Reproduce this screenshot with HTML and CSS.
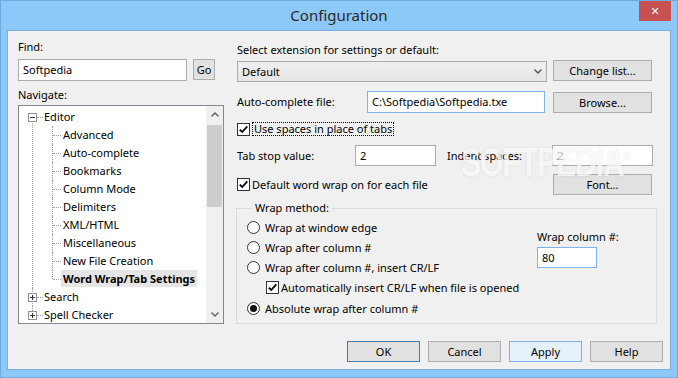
FILE: index.html
```html
<!DOCTYPE html>
<html lang="en">
<head>
  <meta charset="UTF-8"/>
  <title>Configuration</title>
  <link rel="stylesheet" href="styles.css">
</head>
<body>

  <div class="window">
    <div class="titlebar">
      <span class="title">Configuration</span>
      <button class="close-btn">&#x2715;</button>
    </div>

    <div class="panel">
      <div class="main">

        <!-- left: find + navigation tree -->
        <div class="left">
          <div class="lbl">Find:</div>
          <div class="find-row">
            <div class="field find">Softpedia</div>
            <button class="btn go">Go</button>
          </div>
          <div class="lbl nav-lbl">Navigate:</div>
          <div class="tree-box">
            <ul class="tree">
              <li>
                <svg class="exp" width="9" height="9" viewBox="0 0 9 9"><rect x="0.5" y="0.5" width="8" height="8" fill="#fff" stroke="#919191"/><path d="M2 4.5h5" stroke="#333"/></svg>
                <div class="row">Editor</div>
                <ul class="kids">
                  <li><div class="row">Advanced</div></li>
                  <li><div class="row">Auto-complete</div></li>
                  <li><div class="row">Bookmarks</div></li>
                  <li><div class="row">Column Mode</div></li>
                  <li><div class="row">Delimiters</div></li>
                  <li><div class="row">XML/HTML</div></li>
                  <li><div class="row">Miscellaneous</div></li>
                  <li><div class="row">New File Creation</div></li>
                  <li><div class="row sel"><span>Word Wrap/Tab Settings</span></div></li>
                </ul>
              </li>
              <li>
                <svg class="exp" width="9" height="9" viewBox="0 0 9 9"><rect x="0.5" y="0.5" width="8" height="8" fill="#fff" stroke="#919191"/><path d="M2 4.5h5M4.5 2v5" stroke="#333"/></svg>
                <div class="row">Search</div>
              </li>
              <li>
                <svg class="exp" width="9" height="9" viewBox="0 0 9 9"><rect x="0.5" y="0.5" width="8" height="8" fill="#fff" stroke="#919191"/><path d="M2 4.5h5M4.5 2v5" stroke="#333"/></svg>
                <div class="row">Spell Checker</div>
              </li>
            </ul>
            <div class="vscroll">
              <div class="arr"><svg width="8" height="5" viewBox="0 0 8 5"><path d="M0.5 4.5L4 1L7.5 4.5" fill="none" stroke="#606060" stroke-width="1.4"/></svg></div>
              <div class="thumb"></div>
              <div class="track"></div>
              <div class="arr"><svg width="8" height="5" viewBox="0 0 8 5"><path d="M0.5 0.5L4 4L7.5 0.5" fill="none" stroke="#606060" stroke-width="1.4"/></svg></div>
            </div>
          </div>
        </div>

        <!-- right: settings for the selected page -->
        <div class="right">
          <div class="lbl">Select extension for settings or default:</div>
          <div class="row-ext">
            <div class="select">
              <span>Default</span>
              <svg width="8" height="5" viewBox="0 0 8 5"><path d="M0.5 0.5L4 4L7.5 0.5" fill="none" stroke="#555" stroke-width="1.4"/></svg>
            </div>
            <button class="btn wide">Change list...</button>
          </div>

          <div class="row-file">
            <div class="lbl file-lbl">Auto-complete file:</div>
            <div class="field focus file">C:\Softpedia\Softpedia.txe</div>
            <button class="btn wide">Browse...</button>
          </div>

          <div class="check-row">
            <span class="chk"><svg width="11" height="11" viewBox="0 0 11 11"><path d="M1.8 5.6L4.2 8L9.3 2.3" fill="none" stroke="#000" stroke-width="1.8"/></svg></span>
            <span class="focus-text">Use spaces in place of tabs</span>
          </div>

          <div class="row-tabs">
            <div class="lbl tab-lbl">Tab stop value:</div>
            <div class="field small">2</div>
            <div class="lbl indent-lbl">Indent spaces:</div>
            <div class="field indent">2</div>
          </div>

          <div class="check-row wrap-row">
            <span class="chk"><svg width="11" height="11" viewBox="0 0 11 11"><path d="M1.8 5.6L4.2 8L9.3 2.3" fill="none" stroke="#000" stroke-width="1.8"/></svg></span>
            <span>Default word wrap on for each file</span>
            <button class="btn wide font-btn">Font...</button>
          </div>

          <fieldset class="group">
            <legend>Wrap method:</legend>
            <div class="group-body">
              <div class="options">
                <div class="opt"><span class="radio"></span>Wrap at window edge</div>
                <div class="opt"><span class="radio"></span>Wrap after column #</div>
                <div class="opt"><span class="radio"></span>Wrap after column #, insert CR/LF</div>
                <div class="opt sub">
                  <span class="chk"><svg width="11" height="11" viewBox="0 0 11 11"><path d="M1.8 5.6L4.2 8L9.3 2.3" fill="none" stroke="#000" stroke-width="1.8"/></svg></span>
                  Automatically insert CR/LF when file is opened
                </div>
                <div class="opt"><span class="radio on"></span>Absolute wrap after column #</div>
              </div>
              <div class="wrapcol">
                <div class="lbl">Wrap column #:</div>
                <div class="field focus col">80</div>
              </div>
            </div>
          </fieldset>
        </div>
      </div>

      <div class="footer">
        <button class="btn dlg default">OK</button>
        <button class="btn dlg">Cancel</button>
        <button class="btn dlg hot">Apply</button>
        <button class="btn dlg">Help</button>
      </div>

      <div class="watermark">SOFTPEDIA<sup>&reg;</sup></div>
    </div>
  </div>

</body>
</html>
```

FILE: styles.css
```css
* {
  margin: 0; padding: 0;
  box-sizing: border-box;
}

body {
  background: #8cc8f8;
  font-family: "Noto Sans", "Open Sans", sans-serif;
  font-size: 11px;
  color: #000;
}

.window {
  width: 678px;
  height: 378px;
  background: #8cc8f8;
  border: 1px solid #6fa9e0;
  display: flex;
  flex-direction: column;
  position: relative;
}

.titlebar {
  height: 29px;
  display: flex;
  justify-content: center;
  align-items: center;
  padding-bottom: 1px;
  font-size: 15px;
  color: #2b2b2b;
}

.close-btn {
  position: absolute;
  top: 0;
  right: 6px;
  width: 32px;
  height: 20px;
  border: none;
  background: #c75050;
  color: #fff;
  font-size: 11px;
  font-weight: bold;
  font-family: "DejaVu Sans", sans-serif;
}

.panel {
  margin: 0 6px;
  height: 340px;
  background: #f0f0f0;
  border: 1px solid #7aaee0;
  display: flex;
  flex-direction: column;
  position: relative;
}

.main {
  display: flex;
  gap: 13px;
  padding: 8px 13px 0 10px;
}

.lbl {
  height: 16px;
  line-height: 16px;
  white-space: nowrap;
}

/* generic controls */
.field {
  height: 22px;
  border: 1px solid #abadb3;
  background: #fff;
  padding: 0 4px;
  line-height: 20px;
  white-space: nowrap;
}

.field.focus {
  border-color: #7eb4ea;
}

.btn {
  height: 21px;
  border: 1px solid #adadad;
  background: #e1e1e1;
  font: inherit;
  color: #000;
  text-align: center;
  line-height: 19px;
}

.btn.wide {
  width: 99px;
  flex-shrink: 0;
}

.chk {
  width: 13px;
  height: 13px;
  border: 1px solid #333;
  background: #fff;
  display: inline-flex;
  flex-shrink: 0;
}

.radio {
  width: 13px;
  height: 13px;
  border: 1px solid #333;
  border-radius: 50%;
  background: #fff;
  display: inline-flex;
  align-items: center;
  justify-content: center;
  flex-shrink: 0;
}

.radio.on::after {
  content: "";
  width: 7px;
  height: 7px;
  border-radius: 50%;
  background: #111;
}

/* left column */
.left {
  width: 206px;
  flex-shrink: 0;
}

.find-row {
  display: flex;
  align-items: flex-start;
  gap: 6px;
  margin-top: 4px;
}

.find {
  width: 169px;
}

.go {
  width: 22px;
}

.nav-lbl {
  margin-top: 6px;
}

.tree-box {
  margin-top: 2px;
  height: 219px;
  border: 1px solid #828790;
  background: #fff;
  display: flex;
}

.tree {
  flex: 1;
  list-style: none;
  padding: 2px 0 0 13px;
  overflow: hidden;
}

.tree li {
  position: relative;
  list-style: none;
}

.row {
  height: 18px;
  line-height: 18px;
  white-space: nowrap;
}

.tree > li {
  padding-left: 12px;
}

.tree > li::before {
  content: "";
  position: absolute;
  left: 0; top: 0; bottom: 0;
  border-left: 1px dotted #a0a0a0;
}

.tree > li:first-child::before { top: 9px; }
.tree > li:last-child::before { bottom: auto; height: 9px; }

.tree > li::after {
  content: "";
  position: absolute;
  left: 5px; top: 9px;
  width: 6px;
  border-top: 1px dotted #a0a0a0;
}

.exp {
  position: absolute;
  left: -4px;
  top: 5px;
  z-index: 1;
}

.kids {
  margin-left: 8px;
}

.kids li {
  padding-left: 11px;
}

.kids li::before {
  content: "";
  position: absolute;
  left: 0; top: 0; bottom: 0;
  border-left: 1px dotted #a0a0a0;
}

.kids li:last-child::before { bottom: auto; height: 9px; }

.kids li::after {
  content: "";
  position: absolute;
  left: 1px; top: 9px;
  width: 8px;
  border-top: 1px dotted #a0a0a0;
}

.row.sel span {
  display: inline-block;
  font-weight: bold;
  background: #e5e5e5;
  padding: 0 2px;
  margin-left: -2px;
  height: 17px;
  line-height: 17px;
}

.vscroll {
  width: 17px;
  background: #f0f0f0;
  display: flex;
  flex-direction: column;
}

.arr {
  height: 17px;
  display: flex;
  align-items: center;
  justify-content: center;
}

.thumb {
  margin: 2px 1px 0;
  height: 82px;
  background: #cdcdcd;
}

.track { flex: 1; }

/* right column */
.right {
  width: 420px;
  padding-top: 3px;
}

.row-ext {
  display: flex;
  align-items: flex-start;
  gap: 6px;
  margin-top: 2px;
  height: 22px;
}

.select {
  width: 310px;
  height: 21px;
  margin-top: 1px;
  border: 1px solid #acacac;
  background: linear-gradient(#f0f0f0, #e5e5e5);
  display: flex;
  align-items: center;
  justify-content: space-between;
  padding: 0 4px 0 4px;
}

.row-file {
  display: flex;
  align-items: flex-start;
  margin-top: 9px;
  height: 22px;
}

.file-lbl {
  width: 130px;
  line-height: 22px;
  height: 22px;
}

.file {
  width: 178px;
  margin-right: 8px;
}

.row-file .btn {
  margin-top: 1px;
}

.check-row {
  display: flex;
  align-items: center;
  gap: 2px;
  height: 16px;
  margin-top: 8px;
}

.focus-text {
  border: 1px dotted #000;
  padding: 0 1px;
  line-height: 12px;
}

.row-tabs {
  display: flex;
  align-items: center;
  margin-top: 8px;
  height: 21px;
}

.tab-lbl { width: 118px; }

.field.small {
  width: 81px;
  height: 21px;
  line-height: 19px;
}

.indent-lbl {
  width: 105px;
  margin-left: 11px;
}

.field.indent {
  width: 101px;
  height: 21px;
  line-height: 19px;
}

.wrap-row {
  height: 21px;
}

.font-btn {
  margin-left: auto;
  margin-right: 5px;
}

.group {
  margin: 5px 0 0 -1px;
  border: 1px solid #dcdcdc;
  padding: 1px 0 5px 10px;
}

.group legend {
  margin-left: 5px;
  padding: 0 3px;
  line-height: 16px;
}

.group-body {
  display: flex;
}

.options {
  width: 290px;
}

.opt {
  height: 20px;
  display: flex;
  align-items: center;
  gap: 5px;
  white-space: nowrap;
}

.opt.sub {
  padding-left: 19px;
  gap: 2px;
  height: 21px;
}

.wrapcol {
  margin-top: 12px;
}

.field.col {
  width: 60px;
  height: 21px;
  line-height: 19px;
  margin-top: 2px;
}

/* dialog buttons */
.footer {
  margin-top: auto;
  display: flex;
  justify-content: flex-end;
  gap: 8px;
  padding: 0 7px 7px 0;
}

.btn.dlg {
  width: 73px;
}

.btn.default {
  border-color: #3c7fb1;
}

.btn.hot {
  background: #e5f1fb;
  border-color: #7eb4ea;
}

.watermark {
  position: absolute;
  left: 453px;
  top: 114px;
  font-family: "Liberation Sans", sans-serif;
  font-weight: bold;
  font-size: 30px;
  letter-spacing: -1px;
  color: rgba(255, 255, 255, 0.75);
  text-shadow: 0 0 2px rgba(0, 0, 0, 0.1);
  transform: scaleY(1.35);
  pointer-events: none;
}

.watermark sup {
  font-size: 9px;
}
```
